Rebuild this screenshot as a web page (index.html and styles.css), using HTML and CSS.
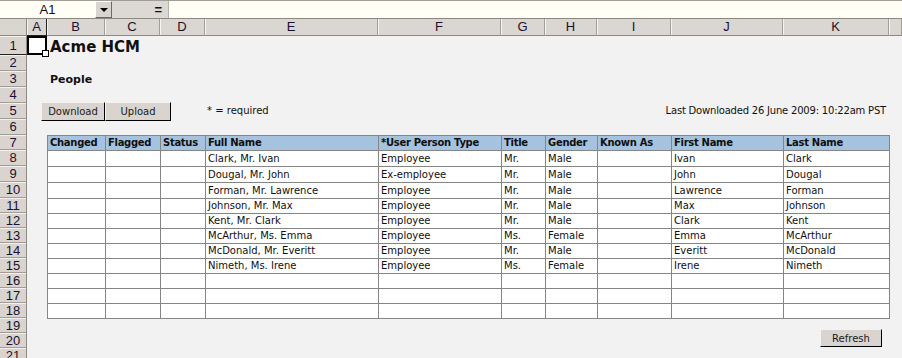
FILE: index.html
```html
<html>
<head>
<link rel="stylesheet" href="styles.css">
</head>
<body>
<div class="formula-bar">
  <div class="name-box">A1</div>
  <div class="name-drop"><span class="tri"></span></div>
  <div class="fx">=</div>
  <div class="formula-input"></div>
</div>

<div class="sheet">
  <div class="corner"></div>
  <div class="col-head sel">A</div>
  <div class="col-head">B</div>
  <div class="col-head">C</div>
  <div class="col-head">D</div>
  <div class="col-head">E</div>
  <div class="col-head">F</div>
  <div class="col-head">G</div>
  <div class="col-head">H</div>
  <div class="col-head">I</div>
  <div class="col-head">J</div>
  <div class="col-head">K</div>
  <div class="col-head"></div>

  <div class="row-head sel r1">1</div>
  <div class="row-head r2">2</div>
  <div class="row-head r3">3</div>
  <div class="row-head r4">4</div>
  <div class="row-head r5">5</div>
  <div class="row-head r6">6</div>
  <div class="row-head r7">7</div>
  <div class="row-head r8">8</div>
  <div class="row-head r9">9</div>
  <div class="row-head r10">10</div>
  <div class="row-head r11">11</div>
  <div class="row-head r12">12</div>
  <div class="row-head r13">13</div>
  <div class="row-head r14">14</div>
  <div class="row-head r15">15</div>
  <div class="row-head r16">16</div>
  <div class="row-head r17">17</div>
  <div class="row-head r18">18</div>
  <div class="row-head r19">19</div>
  <div class="row-head r20">20</div>
  <div class="row-head r21">21</div>

  <div class="active-cell"></div>
  <div class="title">Acme HCM</div>
  <div class="subtitle">People</div>

  <div class="toolbar">
    <button class="btn btn-download">Download</button>
    <button class="btn btn-upload">Upload</button>
  </div>
  <div class="required">* = required</div>
  <div class="last-download">Last Downloaded 26 June 2009: 10:22am PST</div>

  <table class="people">
    <colgroup>
      <col style="width:58px"><col style="width:55px"><col style="width:45px">
      <col style="width:173px"><col style="width:123px"><col style="width:44px">
      <col style="width:52px"><col style="width:74px"><col style="width:112px">
      <col style="width:106px">
    </colgroup>
    <tr class="h15">
      <th>Changed</th><th>Flagged</th><th>Status</th><th>Full Name</th>
      <th>*User Person Type</th><th>Title</th><th>Gender</th><th>Known As</th>
      <th>First Name</th><th>Last Name</th>
    </tr>
    <tr class="h16"><td></td><td></td><td></td><td>Clark, Mr. Ivan</td><td>Employee</td><td>Mr.</td><td>Male</td><td></td><td>Ivan</td><td>Clark</td></tr>
    <tr class="h16"><td></td><td></td><td></td><td>Dougal, Mr. John</td><td>Ex-employee</td><td>Mr.</td><td>Male</td><td></td><td>John</td><td>Dougal</td></tr>
    <tr class="h16"><td></td><td></td><td></td><td>Forman, Mr. Lawrence</td><td>Employee</td><td>Mr.</td><td>Male</td><td></td><td>Lawrence</td><td>Forman</td></tr>
    <tr class="h15"><td></td><td></td><td></td><td>Johnson, Mr. Max</td><td>Employee</td><td>Mr.</td><td>Male</td><td></td><td>Max</td><td>Johnson</td></tr>
    <tr class="h15"><td></td><td></td><td></td><td>Kent, Mr. Clark</td><td>Employee</td><td>Mr.</td><td>Male</td><td></td><td>Clark</td><td>Kent</td></tr>
    <tr class="h15"><td></td><td></td><td></td><td>McArthur, Ms. Emma</td><td>Employee</td><td>Ms.</td><td>Female</td><td></td><td>Emma</td><td>McArthur</td></tr>
    <tr class="h15"><td></td><td></td><td></td><td>McDonald, Mr. Everitt</td><td>Employee</td><td>Mr.</td><td>Male</td><td></td><td>Everitt</td><td>McDonald</td></tr>
    <tr class="h15"><td></td><td></td><td></td><td>Nimeth, Ms. Irene</td><td>Employee</td><td>Ms.</td><td>Female</td><td></td><td>Irene</td><td>Nimeth</td></tr>
    <tr class="h15"><td></td><td></td><td></td><td></td><td></td><td></td><td></td><td></td><td></td><td></td></tr>
    <tr class="h15"><td></td><td></td><td></td><td></td><td></td><td></td><td></td><td></td><td></td><td></td></tr>
    <tr class="h15"><td></td><td></td><td></td><td></td><td></td><td></td><td></td><td></td><td></td><td></td></tr>
  </table>

  <div class="refresh-wrap">
    <button class="btn btn-refresh">Refresh</button>
  </div>
</div>
</body>
</html>
```

FILE: styles.css
```css
* {
  box-sizing: border-box;
}

body {
  margin: 0;
  width: 902px;
  height: 358px;
  overflow: hidden;
  background: #f2f2f2;
  font-family: "DejaVu Sans", sans-serif;
  font-size: 10px;
  color: #101010;
}

/* formula bar */
.formula-bar {
  display: flex;
  height: 19px;
  border-top: 1px solid #a39d96;
  border-bottom: 1px solid #8f8880;
  background: #dcd8d3;
}

.name-box {
  width: 95px;
  background: #fffff6;
  font-family: "Liberation Sans", sans-serif;
  font-size: 13px;
  line-height: 17px;
  text-align: center;
  color: #111;
}

.name-drop {
  width: 17px;
  background: #d8d4ce;
  border-left: 1px solid #fff;
  border-top: 1px solid #fff;
  border-right: 1px solid #6e6962;
  border-bottom: 1px solid #6e6962;
  display: flex;
  align-items: center;
  justify-content: center;
}

.tri {
  width: 0;
  height: 0;
  border-left: 4px solid transparent;
  border-right: 4px solid transparent;
  border-top: 4px solid #000;
}

.fx {
  width: 56px;
  text-align: right;
  padding-right: 6px;
  font-family: "Liberation Sans", sans-serif;
  font-weight: bold;
  font-size: 13px;
  line-height: 17px;
}

.formula-input {
  flex: 1;
  background: #fffff6;
  border-left: 1px solid #b8b2aa;
}

/* sheet grid */
.sheet {
  display: grid;
  grid-template-columns: 27px 20px 58px 55px 45px 173px 123px 44px 52px 74px 112px 106px 1fr;
  grid-template-rows: 17px 19px 16px 16px 16px 16px 16px 15px 16px 16px 16px 15px 15px 15px 15px 15px 15px 15px 15px 15px 15px 15px;
}

.corner {
  background: #d9d5cf;
  border-right: 1px solid #8f8880;
  border-bottom: 1px solid #8f8880;
}

.col-head {
  background: #dad6d1;
  border-right: 1px solid #a59e97;
  border-bottom: 1px solid #8f8880;
  box-shadow: inset 1px 0 #f6f4f1;
  font-family: "Liberation Sans", sans-serif;
  font-size: 13px;
  line-height: 16px;
  text-align: center;
  color: #1a1030;
}

.col-head.sel {
  border-right-color: #222;
  border-bottom-color: #222;
}

.row-head {
  grid-column: 1;
  background: #d9d4cf;
  border-right: 1px solid #8f8880;
  border-bottom: 1px solid #a39c94;
  box-shadow: inset 0 1px #f3f1ee;
  font-family: "Liberation Sans", sans-serif;
  font-size: 13px;
  text-align: center;
  color: #1a1030;
  display: flex;
  align-items: center;
  justify-content: center;
}

.row-head.sel {
  border-bottom-color: #222;
}

.r1 { grid-row: 2; }
.r2 { grid-row: 3; }
.r3 { grid-row: 4; }
.r4 { grid-row: 5; }
.r5 { grid-row: 6; }
.r6 { grid-row: 7; }
.r7 { grid-row: 8; }
.r8 { grid-row: 9; }
.r9 { grid-row: 10; }
.r10 { grid-row: 11; }
.r11 { grid-row: 12; }
.r12 { grid-row: 13; }
.r13 { grid-row: 14; }
.r14 { grid-row: 15; }
.r15 { grid-row: 16; }
.r16 { grid-row: 17; }
.r17 { grid-row: 18; }
.r18 { grid-row: 19; }
.r19 { grid-row: 20; }
.r20 { grid-row: 21; }
.r21 { grid-row: 22; }

.active-cell {
  grid-column: 2;
  grid-row: 2;
  position: relative;
  background: #fff;
  border: 2px solid #000;
}

.active-cell::after {
  content: "";
  position: absolute;
  right: -4px;
  bottom: -4px;
  width: 5px;
  height: 5px;
  background: #fff;
  border: 1px solid #000;
}

.title {
  grid-column: 3 / 7;
  grid-row: 2;
  padding: 2px 0 0 3px;
  font-weight: bold;
  font-size: 15px;
  line-height: 19px;
}

.subtitle {
  grid-column: 3 / 6;
  grid-row: 4;
  padding-left: 3px;
  font-weight: bold;
  font-size: 11px;
  line-height: 17px;
}

.toolbar {
  grid-column: 2 / 6;
  grid-row: 6;
  display: flex;
  align-items: center;
  padding-left: 14px;
}

.btn {
  height: 19px;
  padding: 0;
  background: #d9d4cf;
  border: 1px solid #d9d4cf;
  border-top-color: #f4f2ef;
  border-left-color: #f4f2ef;
  border-right-color: #000;
  border-bottom-color: #000;
  font-family: "DejaVu Sans", sans-serif;
  font-size: 10px;
  color: #1a1a1a;
}

.btn-download {
  width: 64px;
}

.btn-upload {
  width: 66px;
}

.required {
  grid-column: 6 / 8;
  grid-row: 6;
  padding-left: 2px;
  line-height: 16px;
}

.last-download {
  grid-column: 9 / 13;
  grid-row: 6;
  text-align: right;
  padding-right: 3px;
  line-height: 16px;
  white-space: nowrap;
  letter-spacing: -0.2px;
}

/* data table */
.people {
  grid-column: 3 / 13;
  grid-row: 8 / 20;
  border-collapse: collapse;
  table-layout: fixed;
  width: 842px;
  background: #fff;
  font-family: "DejaVu Sans", sans-serif;
  font-size: 10px;
  color: #101010;
}

.people th,
.people td {
  border: 1px solid #858585;
  padding: 0 0 0 2px;
  text-align: left;
  white-space: nowrap;
  overflow: hidden;
  line-height: 12px;
}

.people th {
  background: #a5c3df;
  font-weight: bold;
  letter-spacing: -0.3px;
}

.h15 { height: 15px; }
.h16 { height: 16px; }

.refresh-wrap {
  grid-column: 12;
  grid-row: 20 / 22;
  display: flex;
  justify-content: flex-end;
  align-items: flex-end;
  padding: 0 7px 1px 0;
}

.btn-refresh {
  width: 62px;
  height: 18px;
}
```
